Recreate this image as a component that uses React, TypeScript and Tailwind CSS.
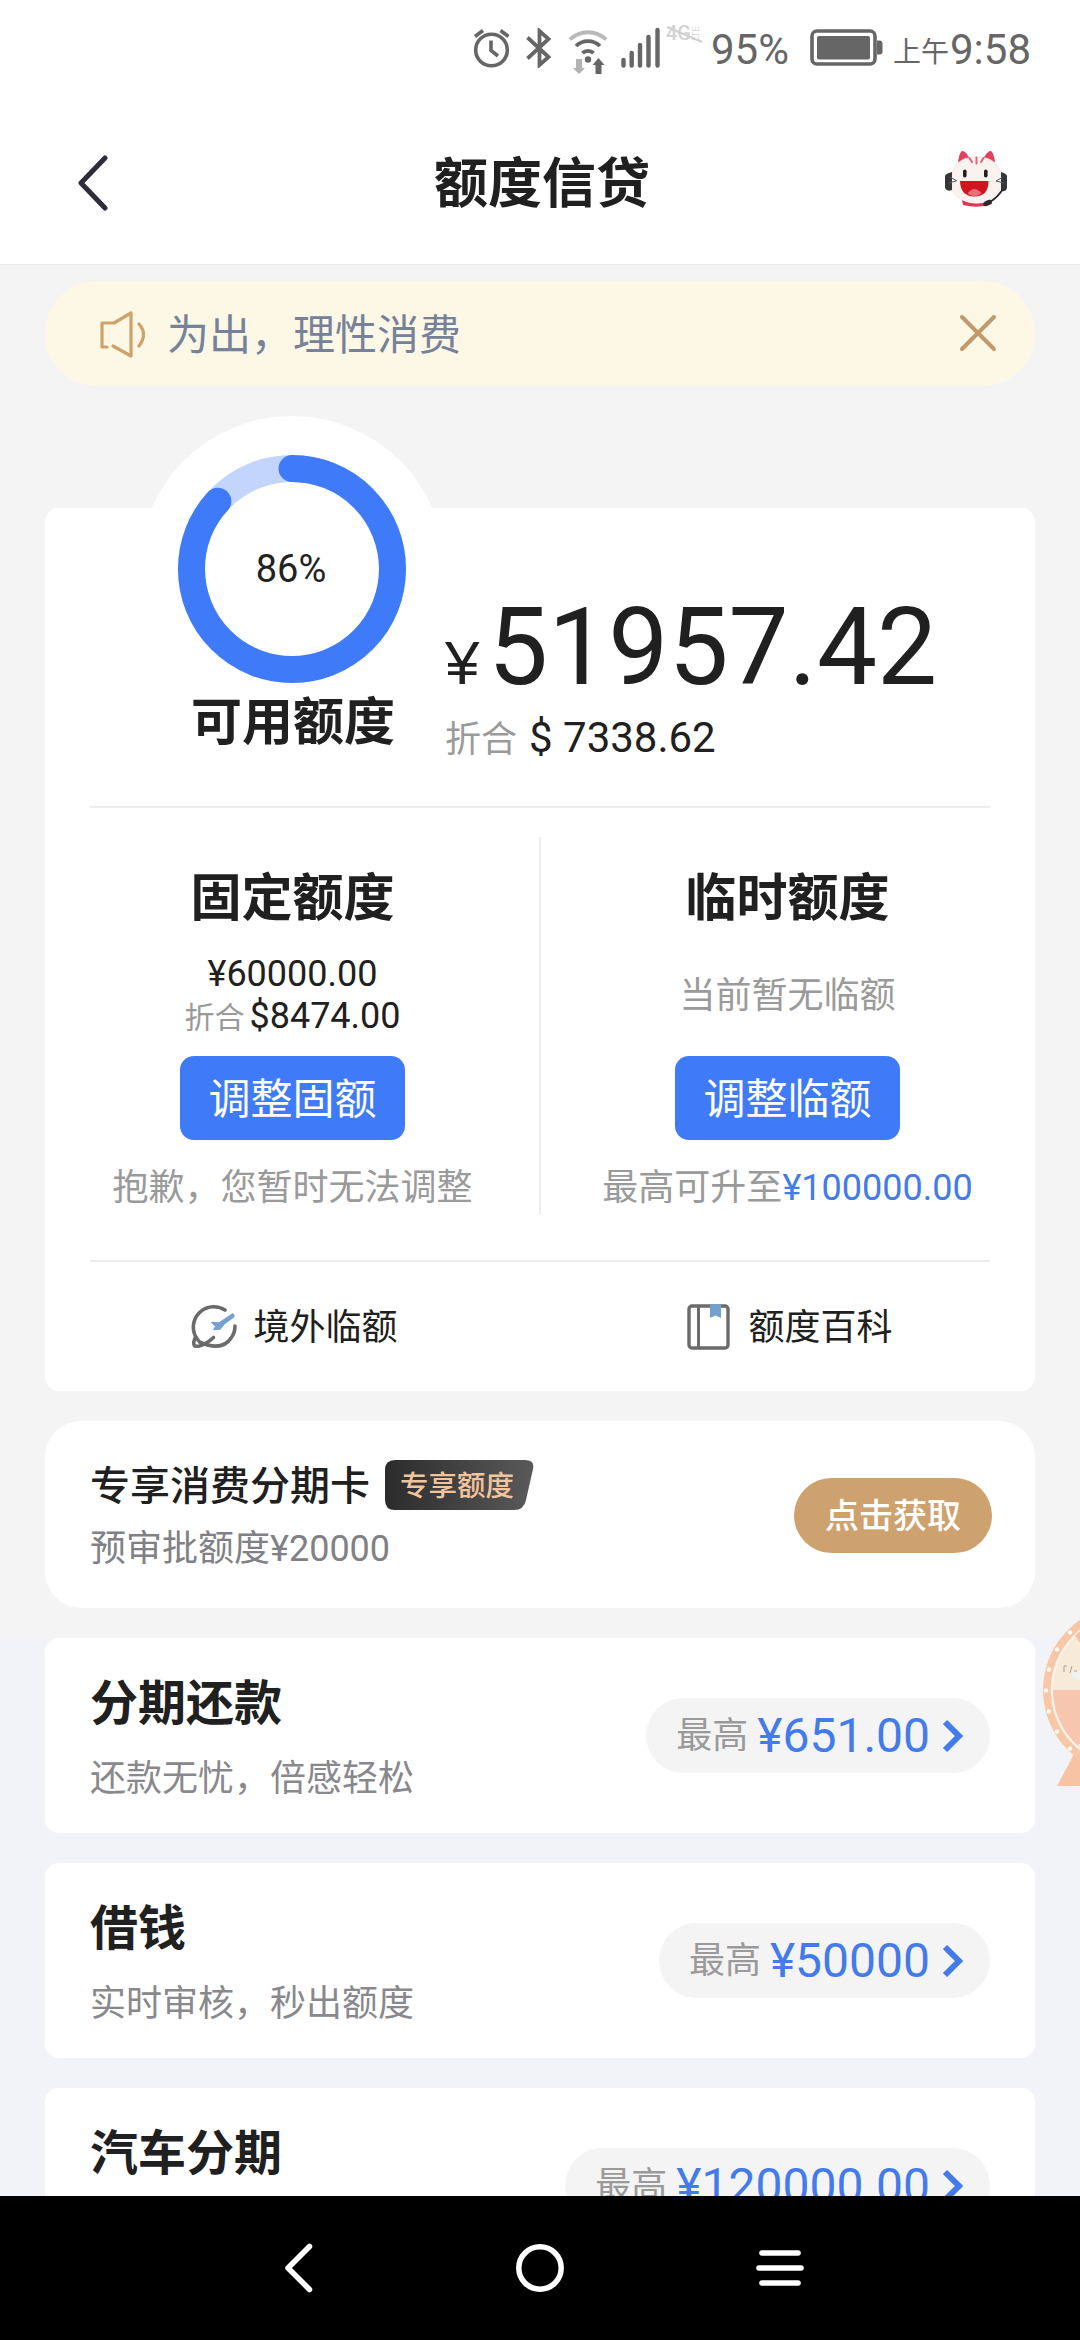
import type { ReactNode } from "react";

const offers = [
    { title: "分期还款", description: "还款无忧，倍感轻松", amount: "¥651.00" },
    { title: "借钱", description: "实时审核，秒出额度", amount: "¥50000" },
    { title: "汽车分期", description: "", amount: "¥120000.00" },
];

function StatusBar() {
    return (
        <div className="flex h-[96px] items-center pl-[473px] text-[#666]">
            <svg className="h-[40px] w-[38px] shrink-0" viewBox="0 0 38 40" fill="none" stroke="currentColor" strokeWidth="3.6">
                <circle cx="18.5" cy="22" r="15.8" />
                <path d="M18 12.5v10l7 5.5M2 8.5l8-6M27.5 2.500l8 6" />
            </svg>
            <svg className="ml-[14px] h-[40px] w-[28px] shrink-0" viewBox="0 0 28 40" fill="none" stroke="currentColor" strokeWidth="3.8">
                <path d="M2.500 9.500l21 19.500-9 8V3l9 8L2.500 30.500" />
            </svg>
            <svg className="ml-[15px] mt-[7px] h-[44px] w-[40px] shrink-0" viewBox="0 0 40 44" fill="none" stroke="currentColor" strokeWidth="3.8">
                <path d="M2 9.500a26 26 0 0 1 36 0" stroke="#b9b9b9" />
                <path d="M8 16a17 17 0 0 1 24 0M14.500 23a8 8 0 0 1 11 0" />
                <circle cx="20" cy="29.500" r="3.200" fill="currentColor" stroke="none" />
                <path d="M8 29h6v9h3l-6 6-6-6h3z" fill="#b3b3b3" stroke="none" />
                <path d="M27.500 44v-9h-3l6-7 6 7h-3v9z" fill="currentColor" stroke="none" />
            </svg>
            <svg className="ml-[12px] h-[42px] w-[42px] shrink-0" viewBox="0 0 42 42" stroke="currentColor" strokeWidth="4.400" strokeLinecap="round">
                <path d="M3.500 33v5.500M11.700 26v12.500M20 18v20.500M28.500 10v28.500M37.500 3v35.500" />
            </svg>
            <div className="relative mb-[30px] ml-[4px] flex h-[20px] w-[40px] shrink-0 items-center text-[#d4d4d4]">
                <span className="text-[20px] font-medium leading-none">4G</span>
                <span className="-ml-[2px] -rotate-90 text-[9px] leading-none">LTE</span>
                <svg className="absolute inset-0 h-full w-full" viewBox="0 0 40 20" stroke="#d0d0d0" strokeWidth="2">
                    <path d="M1 4l35 15" />
                </svg>
            </div>
            <span className="ml-[5px] mt-[3px] w-[84px] text-[42px] leading-none">95%</span>
            <svg className="ml-[15px] h-[38px] w-[74px] shrink-0" viewBox="0 0 74 38" fill="none" stroke="currentColor">
                <rect x="2" y="2" width="63" height="33" rx="5" strokeWidth="3.600" />
                <rect x="7" y="7" width="53" height="23.500" rx="2" fill="currentColor" stroke="none" />
                <path d="M67 11.500h2.500a3 3 0 0 1 3 3v8a3 3 0 0 1-3 3H67z" fill="currentColor" stroke="none" />
            </svg>
            <span className="ml-[9px] mt-[10px] text-[28px] leading-none">上午</span>
            <span className="ml-[1px] mt-[3px] text-[42px] leading-none">9:58</span>
        </div>
    );
}

function Mascot() {
    return (
        <svg className="h-[60px] w-[64px]" viewBox="0 0 64 60">
            <path d="M18 50q14 7 30 0v4q-14 5-29 1z" fill="#dc3a54" />
            <path d="M14 13Q15 3 18 1q3-1 8 8zM51 13Q50 3 47 1q-3-1-8 8z" fill="#e2405c" />
            <path d="M7 31Q8 7 32.500 7T58 31q0 21-25.500 21T7 31z" fill="#f9f2ef" stroke="#efe4e0" strokeWidth="0.800" />
            <path d="M25.500 8l2.500 4M32.500 7.500v6M39.500 8L37 12" stroke="#d9667a" strokeWidth="2" strokeLinecap="round" />
            <path d="M8 22q-7 2-7 4v12q2 4 7 2zM57 22q6 2 6 4v12q-1 4-6 3z" fill="#33363a" />
            <path d="M6 27l7 4M5 33l7-2M59 27l-7 4M60 33l-8-2" stroke="#555" strokeWidth="1" />
            <rect x="19" y="19.500" width="3.600" height="8" rx="1.800" fill="#20201f" />
            <rect x="40" y="19.500" width="3.600" height="8" rx="1.800" fill="#20201f" />
            <path d="M16 31h28.500q0 15.500-14 15.500T16 31z" fill="#cf1620" />
            <path d="M23.500 43.500q7-9 14 0-7 5-14 0z" fill="#ea6f7b" />
            <path d="M59 39q-5 8-13 13" fill="none" stroke="#292b30" strokeWidth="1.800" />
            <ellipse cx="43.500" cy="53" rx="4.500" ry="2.600" transform="rotate(-25 43.500 53)" fill="#292b30" />
        </svg>
    );
}

function Header() {
    return (
        <div className="flex h-[168px] items-center justify-between pl-[76px] pr-[72px]">
            <svg className="mb-[-4px] h-[58px] w-[80px]" viewBox="0 0 80 58" fill="none" stroke="#2e2b3b" strokeWidth="5" strokeLinecap="round" strokeLinejoin="round">
                <path d="M29 5L5 30l24 25" />
            </svg>
            <h1 className="mt-[9px] text-[54px] font-bold leading-[64px] text-[#202020]">额度信贷</h1>
            <div className="flex w-[80px] justify-end"><Mascot /></div>
        </div>
    );
}

function Notice() {
    return (
        <div className="flex h-[105px] items-center rounded-[52px] bg-[#fdf7e6] pl-[53px] pr-[37px]">
            <svg className="h-[50px] w-[52px]" viewBox="0 0 52 50" fill="none" stroke="#d0a26b" strokeWidth="3.200" strokeLinecap="round" strokeLinejoin="round">
                <path d="M9 38H4V14h12L33 4v43L15 37" />
                <path d="M41 15q9 10 0 22" />
            </svg>
            <span className="ml-[17px] mt-[4px] grow text-[42px] leading-[60px] text-[#76819a]">为出，理性消费</span>
            <svg className="h-[40px] w-[40px]" viewBox="0 0 40 40" stroke="#c3986a" strokeWidth="4" strokeLinecap="round">
                <path d="M4 3l32 32M36 3L4 35" />
            </svg>
        </div>
    );
}

function QuotaRing() {
    return (
        <div className="relative h-[228px] w-[228px] rounded-full">
            <svg className="h-[228px] w-[228px] -rotate-90" viewBox="0 0 228 228" fill="none" strokeWidth="27">
                <circle cx="114" cy="114" r="100.500" stroke="#c4d5fc" />
                <circle cx="114" cy="114" r="100.500" stroke="#3f7bf9" strokeLinecap="round" pathLength="100" strokeDasharray="86.800 100" />
            </svg>
            <div className="absolute inset-0 flex items-center justify-center pr-[2px] text-[38px] text-[#222]">86%</div>
        </div>
    );
}

function QuotaColumn({ title, button, note, children }: { title: string; button: string; note: ReactNode; children: ReactNode }) {
    return (
        <div className="flex flex-1 flex-col items-center pt-[59px]">
            <h2 className="text-[51px] font-bold leading-[64px] text-[#202020]">{title}</h2>
            <div className="mt-[23px] flex h-[84px] flex-col items-center justify-center">{children}</div>
            <button className="mt-[18px] h-[84px] w-[225px] rounded-[14px] bg-[#3f7bf9] pt-[4px] text-[42px] leading-[80px] text-white">{button}</button>
            <p className="mt-[23px] whitespace-nowrap text-[36px] leading-[50px] text-[#9a9a9a]">{note}</p>
        </div>
    );
}

function QuotaCard() {
    return (
        <div className="relative mt-[122px] h-[883px] rounded-[14px] bg-white px-[45px] text-[#202020]">
            {/* white bump behind the ring */}
            <div className="absolute left-[94px] top-[-92px] h-[306px] w-[306px] rounded-full bg-white" />
            <div className="relative -mx-[45px] flex h-[298px]">
                <div className="-mt-[53px] ml-[133px] flex w-[228px] flex-col items-center">
                    <QuotaRing />
                    <div className="mt-[8px] whitespace-nowrap pl-[2px] text-[51px] font-bold leading-[64px]">可用额度</div>
                </div>
                <div className="ml-[39px] pt-[82px]">
                    <div className="flex items-baseline leading-[116px]">
                        <span className="w-[43px] font-['Liberation_Sans'] text-[62px]">¥</span>
                        <span className="text-[107px] leading-[116px]">51957.42</span>
                    </div>
                    <div className="-mt-[8px] flex items-baseline leading-[50px]">
                        <span className="w-[84px] text-[36px] text-[#9a9a9a]">折合</span>
                        <span className="text-[42px]">$ 7338.62</span>
                    </div>
                </div>
            </div>
            <div className="h-[2px] bg-[#ececec]" />
            <div className="-mx-[45px] flex h-[452px]">
                <QuotaColumn title="固定额度" button="调整固额" note="抱歉，您暂时无法调整">
                    <div className="text-[36px] leading-[42px]">¥60000.00</div>
                    <div className="flex items-baseline text-[36px] leading-[42px]">
                        <span className="mr-[5px] text-[30px] text-[#9a9a9a]">折合</span>$8474.00
                    </div>
                </QuotaColumn>
                <div className="-mx-px mt-[29px] h-[377px] w-[2px] bg-[#ececec]" />
                <QuotaColumn title="临时额度" button="调整临额" note={<>最高可升至<span className="text-[#437bea]">¥100000.00</span></>}>
                    <div className="text-[36px] leading-[50px] text-[#9a9a9a]">当前暂无临额</div>
                </QuotaColumn>
            </div>
            <div className="h-[2px] bg-[#ececec]" />
            <div className="-mx-[45px] flex h-[129px] items-center text-[36px]">
                <div className="flex flex-1 items-center justify-center gap-[16px] pl-[4px]">
                    <svg className="h-[46px] w-[46px]" viewBox="0 0 46 46" fill="none" stroke="#6b6b6b" strokeWidth="3.600" strokeLinecap="round" strokeLinejoin="round">
                        <path d="M34 6A20.500 20.500 0 0 0 3.500 30q1 3 5 8Q31 48 40 34q4-5 4-12" />
                        <path d="M4.500 33q-5 11 4 9 7-2 14-8.500" />
                        <path d="M41.500 10q2 1 1 3L33 20l-4 5-6 .500 2-3-4-4 7 .500z" fill="#76a0d4" stroke="#76a0d4" strokeWidth="1.500" />
                    </svg>
                    <span className="mt-[3px]">境外临额</span>
                </div>
                <div className="flex flex-1 items-center justify-center gap-[16px] pl-[4px]">
                    <svg className="h-[46px] w-[46px]" viewBox="0 0 46 46" fill="none" stroke="#6b6b6b" strokeWidth="3.400">
                        <rect x="3" y="2" width="39" height="42" rx="3" />
                        <path d="M12.500 2v42" strokeWidth="3" />
                        <path d="M24 0h11v14l-5.500-2.500L24 14z" fill="#76a0cc" stroke="none" />
                    </svg>
                    <span className="mt-[3px]">额度百科</span>
                </div>
            </div>
        </div>
    );
}

function ExclusiveCard() {
    return (
        <div className="mt-[30px] flex h-[187px] items-center justify-between rounded-[36px] bg-white pl-[45px] pr-[43px]">
            <div className="pt-[6px]">
                <div className="flex items-center">
                    <span className="text-[40px] font-medium leading-[50px] text-[#202020]">专享消费分期卡</span>
                    <div className="relative -mt-[4px] ml-[15px] h-[50px] w-[149px]">
                        <svg className="absolute inset-0 h-full w-full" viewBox="0 0 149 50">
                            <defs>
                                <linearGradient id="badge">
                                    <stop offset="0" stopColor="#2b2b2b" />
                                    <stop offset="1" stopColor="#5a5a5a" />
                                </linearGradient>
                            </defs>
                            <path d="M10 0h130q10 0 8 9l-7 31q-2 10-12 10H10Q0 50 0 40V10Q0 0 10 0z" fill="url(#badge)" />
                        </svg>
                        <span className="relative top-[2px] ml-[15px] text-[28.500px] font-medium leading-[50px] text-[#f0c49c]">专享额度</span>
                    </div>
                </div>
                <p className="mt-[12px] text-[36px] leading-[50px] text-[#808086]">预审批额度¥20000</p>
            </div>
            <button className="mt-[2px] h-[75px] w-[198px] rounded-full bg-[#cea26f] pt-[1px] text-[34px] font-medium leading-[74px] text-white">点击获取</button>
        </div>
    );
}

function OfferCard({ title, description, amount }: { title: string; description: string; amount: string }) {
    return (
        <div className="flex h-[195px] shrink-0 items-center justify-between rounded-[14px] bg-white px-[45px]">
            <div className="pt-[6px]">
                <h3 className="text-[48px] font-bold leading-[60px] text-[#202020]">{title}</h3>
                <p className="mt-[20px] h-[50px] text-[36px] leading-[50px] text-[#88888d]">{description}</p>
            </div>
            <div className="flex h-[75px] items-center rounded-full bg-[#f4f4f4] pl-[30px] pr-[25px]">
                <span className="text-[36px] text-[#9a9a9a]">最高</span>
                <span className="ml-[9px] text-[48px] text-[#437bea]">{amount}</span>
                <svg className="ml-[11px] h-[36px] w-[24px]" viewBox="0 0 24 36" fill="none" stroke="#437bea" strokeWidth="6">
                    <path d="M4 4l14 14L4 32" />
                </svg>
            </div>
        </div>
    );
}

function PrizeWheel() {
    return (
        <svg className="absolute right-0 top-[1600px] h-[200px] w-[40px]" viewBox="1040 1600 40 200">
            <path d="M1074 1754l-17 32h30v-36z" fill="#f7c3a4" />
            <circle cx="1128" cy="1690" r="85" fill="#f8c8a6" />
            <circle cx="1128" cy="1690" r="76" fill="#f7ead8" stroke="#fdf3ec" strokeWidth="2.500" />
            <path d="M1053 1690h75v75a75 75 0 0 1-75-75z" fill="#f6c6ae" />
            <path d="M1075 1636l5-5v12z" fill="#f7c3a4" />
            <path d="M1072 1671h12v11l-12-4z" fill="#f0f0f2" />
            <path d="M1064 1672v-6h3M1070 1673l2-7M1074 1671h3" fill="none" stroke="#aaa09a" strokeWidth="1" />
            <path d="M1078 1745l4-3v10z" fill="#fdeee2" />
            <g fill="#fffaf5">
                <circle cx="1070" cy="1632.500" r="2.200" />
                <circle cx="1057" cy="1649.500" r="2.200" />
                <circle cx="1049" cy="1669.500" r="2.200" />
                <circle cx="1046" cy="1690.500" r="2.200" />
                <circle cx="1049" cy="1711.500" r="2.200" />
                <circle cx="1057" cy="1731.500" r="2.200" />
                <circle cx="1070" cy="1748.500" r="2.200" />
            </g>
        </svg>
    );
}

function NavBar() {
    return (
        <div className="flex h-[144px] items-center justify-between bg-black pl-[275px] pr-[276px]">
            <svg className="h-[56px] w-[48px]" viewBox="0 0 48 56" fill="none" stroke="white" strokeWidth="5.500" strokeLinecap="round" strokeLinejoin="round">
                <path d="M34.500 6.500L13 28l21.500 21.500" />
            </svg>
            <svg className="h-[56px] w-[56px]" viewBox="0 0 56 56" fill="none" stroke="white" strokeWidth="5.500">
                <circle cx="28" cy="28" r="21.200" />
            </svg>
            <svg className="h-[56px] w-[48px]" viewBox="0 0 48 56" stroke="white" strokeWidth="5.600" strokeLinecap="round">
                <path d="M6 13h36M3 28h42M6 43h36" />
            </svg>
        </div>
    );
}

export default function App() {
    return (
        <div className="relative flex h-[2340px] w-[1080px] flex-col overflow-hidden bg-white font-[Roboto,'Noto_Sans_CJK_SC',sans-serif]">
            <StatusBar />
            <Header />
            <div className="flex h-[1932px] flex-col overflow-hidden border-t border-[#ececec] bg-[#f4f4f4]">
                <div className="h-[1373px] shrink-0 px-[45px] pt-[16px]">
                    <Notice />
                    <QuotaCard />
                    <ExclusiveCard />
                </div>
                <div className="flex h-[558px] shrink-0 flex-col gap-[30px] overflow-hidden bg-[#f2f3f8] px-[45px]">
                    {offers.map((offer) => (
                        <OfferCard key={offer.title} {...offer} />
                    ))}
                </div>
            </div>
            <NavBar />
            <PrizeWheel />
        </div>
    );
}
